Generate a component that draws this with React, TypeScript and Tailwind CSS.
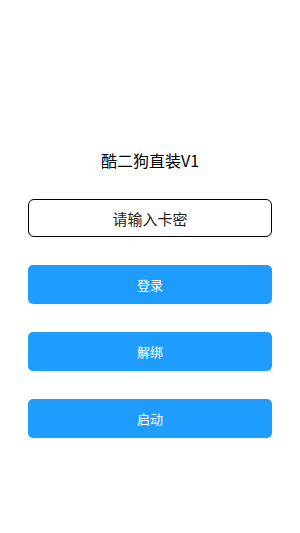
export default function App() {
  return (
    <div
      className="w-[300px] h-[533px] bg-white flex flex-col items-center"
      style={{ fontFamily: '"Noto Sans CJK SC", "Noto Sans", sans-serif' }}
    >
      <h1 className="mt-[148px] h-[24px] leading-[24px] text-[16px] text-black font-normal">
        酷二狗直装V1
      </h1>

      <input
        placeholder="请输入卡密"
        className="mt-[27px] w-[244px] h-[38px] rounded-[6px] border border-black text-center text-[15px] text-black placeholder:text-[#222] outline-none"
      />

      <div className="mt-[28px] flex flex-col gap-[28px]">
        {['登录', '解绑', '启动'].map(label => (
          <button
            key={label}
            className="w-[244px] h-[39px] rounded-[5px] bg-[#1E9DFF] text-white text-[13px]"
          >
            {label}
          </button>
        ))}
      </div>
    </div>
  );
}
